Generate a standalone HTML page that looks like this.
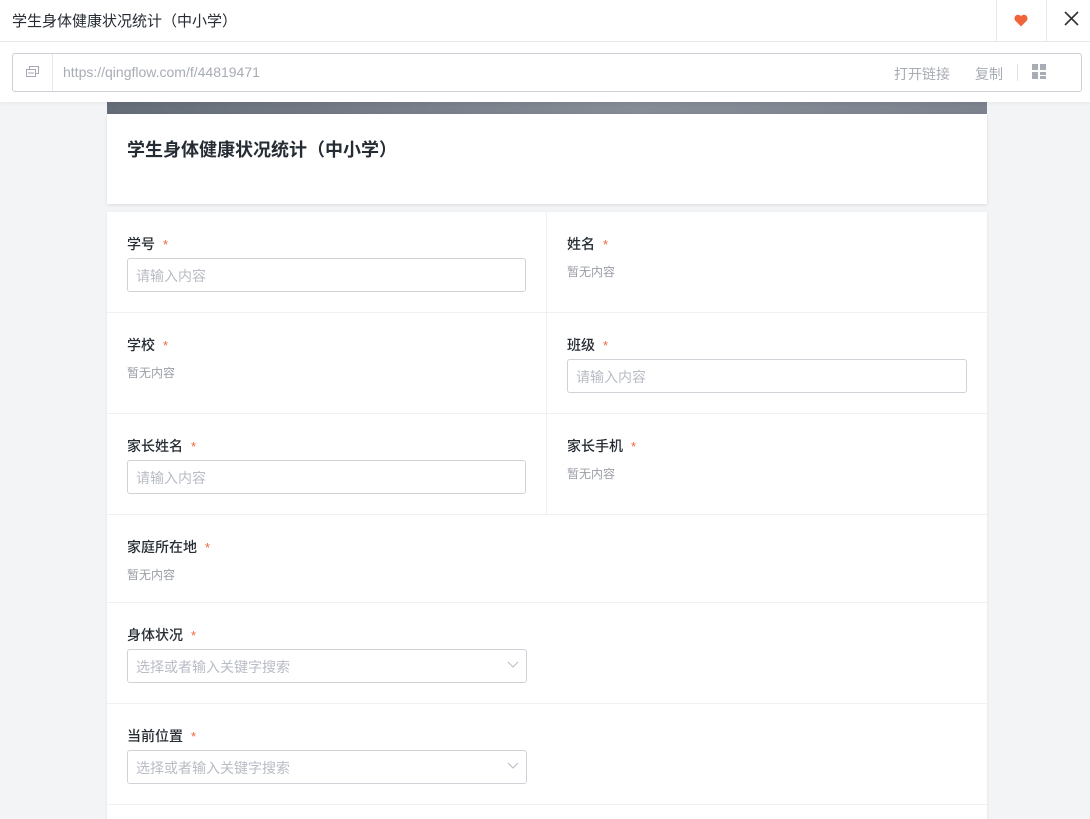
<!DOCTYPE html><html><head><meta charset="utf-8"><style>
*{box-sizing:border-box;margin:0;padding:0}
html,body{width:1090px;height:819px;overflow:hidden}
body{background:#f3f4f6;font-family:"Liberation Sans","Noto Sans CJK SC",sans-serif;position:relative}
.a{position:absolute}
.top{left:0;top:0;width:1090px;height:102px;background:#fff;box-shadow:0 1px 4px rgba(0,0,0,.06);z-index:2}
.lbl{position:absolute;font-size:14px;color:#262c33;font-weight:500}
.lbl i{font-style:normal;color:#f0643a;margin-left:8px;font-size:13px}
.inp{position:absolute;height:34px;border:1px solid #d0d2d8;border-radius:3px;font-size:14px;color:#b8bcc4;padding:7px 8px;background:#fff}
.none{position:absolute;font-size:12px;color:#9a9ea6}
.hl{position:absolute;height:1px;background:#eef0f2}
.z{z-index:3}
</style></head><body>
<div class="a top"></div>
<div class="a z" style="left:12px;top:10px;font-size:15px;color:#262c33">学生身体健康状况统计（中小学）</div>
<div class="a z" style="left:996px;top:0;width:1px;height:41px;background:#e6e8eb"></div>
<div class="a z" style="left:1046px;top:0;width:1px;height:41px;background:#e6e8eb"></div>
<svg class="a z" style="left:1014px;top:14px" width="14" height="13" viewBox="0 0 14 13"><path d="M7 12.5L1.2 6.6A3.4 3.4 0 0 1 7 2.2a3.4 3.4 0 0 1 5.8 4.4z" fill="#f0643a"/></svg>
<svg class="a z" style="left:1064px;top:11px" width="15" height="15" viewBox="0 0 15 15"><path d="M1 1L14 14M14 1L1 14" stroke="#333" stroke-width="1.6"/></svg>
<div class="a z" style="left:0;top:41px;width:1090px;height:1px;background:#e6e8eb"></div>
<div class="a z" style="left:12px;top:53px;width:1070px;height:39px;border:1px solid #cdd0d6;border-radius:3px"></div>
<div class="a z" style="left:52px;top:54px;width:1px;height:37px;background:#e6e8eb"></div>
<svg class="a z" style="left:26px;top:66px" width="13" height="12" viewBox="0 0 13 12"><rect x="3.5" y="0.5" width="9" height="7" fill="none" stroke="#a5a9b1"/><rect x="0.5" y="3.5" width="9" height="7" fill="#fff" stroke="#a5a9b1"/><path d="M2 7h6" stroke="#a5a9b1"/></svg>
<div class="a z" style="left:63px;top:64px;font-size:14px;color:#a8acb4">https://qingflow.com/f/44819471</div>
<div class="a z" style="left:894px;top:64px;font-size:14px;color:#a8acb4">打开链接</div>
<div class="a z" style="left:975px;top:64px;font-size:14px;color:#a8acb4">复制</div>
<div class="a z" style="left:1017px;top:64px;width:1px;height:17px;background:#e0e2e6"></div>
<svg class="a z" style="left:1032px;top:64px" width="14" height="15" viewBox="0 0 14 15" fill="#a8acb4"><rect x="0" y="0" width="6" height="6"/><rect x="8" y="0" width="6" height="6"/><rect x="0" y="8" width="6" height="7"/><rect x="8" y="8" width="6" height="3"/><rect x="8" y="12" width="6" height="3"/></svg>
<div class="a" style="left:107px;top:102px;width:880px;height:12px;background:linear-gradient(90deg,#646c78,#868c96 60%,#7c838e)"></div>
<div class="a" style="left:107px;top:114px;width:880px;height:90px;background:#fff;box-shadow:0 1px 3px rgba(0,0,0,.1)"></div>
<div class="a" style="left:127px;top:136px;font-size:18px;font-weight:bold;color:#262c33">学生身体健康状况统计（中小学）</div>
<div class="a" style="left:107px;top:212px;width:880px;height:620px;background:#fff;box-shadow:0 1px 3px rgba(0,0,0,.08)"></div>
<div class="a" style="left:546px;top:212px;width:1px;height:303px;background:#eef0f2"></div>
<div class="hl" style="left:107px;top:312px;width:880px"></div>
<div class="hl" style="left:107px;top:413px;width:880px"></div>
<div class="hl" style="left:107px;top:514px;width:880px"></div>
<div class="hl" style="left:107px;top:602px;width:880px"></div>
<div class="hl" style="left:107px;top:703px;width:880px"></div>
<div class="hl" style="left:107px;top:804px;width:880px"></div>
<div class="lbl" style="left:127px;top:234px">学号<i>*</i></div>
<div class="inp" style="left:127px;top:258px;width:399px">请输入内容</div>
<div class="lbl" style="left:567px;top:234px">姓名<i>*</i></div>
<div class="none" style="left:567px;top:263px">暂无内容</div>
<div class="lbl" style="left:127px;top:335px">学校<i>*</i></div>
<div class="none" style="left:127px;top:364px">暂无内容</div>
<div class="lbl" style="left:567px;top:335px">班级<i>*</i></div>
<div class="inp" style="left:567px;top:359px;width:400px">请输入内容</div>
<div class="lbl" style="left:127px;top:436px">家长姓名<i>*</i></div>
<div class="inp" style="left:127px;top:460px;width:399px">请输入内容</div>
<div class="lbl" style="left:567px;top:436px">家长手机<i>*</i></div>
<div class="none" style="left:567px;top:465px">暂无内容</div>
<div class="lbl" style="left:127px;top:537px">家庭所在地<i>*</i></div>
<div class="none" style="left:127px;top:566px">暂无内容</div>
<div class="lbl" style="left:127px;top:625px">身体状况<i>*</i></div>
<div class="inp" style="left:127px;top:649px;width:400px">选择或者输入关键字搜索</div>
<svg class="a" style="left:507px;top:661px" width="12" height="8" viewBox="0 0 12 8"><path d="M1 1l5 5 5-5" fill="none" stroke="#b8bcc4" stroke-width="1.1"/></svg>
<div class="lbl" style="left:127px;top:726px">当前位置<i>*</i></div>
<div class="inp" style="left:127px;top:750px;width:400px">选择或者输入关键字搜索</div>
<svg class="a" style="left:507px;top:762px" width="12" height="8" viewBox="0 0 12 8"><path d="M1 1l5 5 5-5" fill="none" stroke="#b8bcc4" stroke-width="1.1"/></svg>
</body></html>
